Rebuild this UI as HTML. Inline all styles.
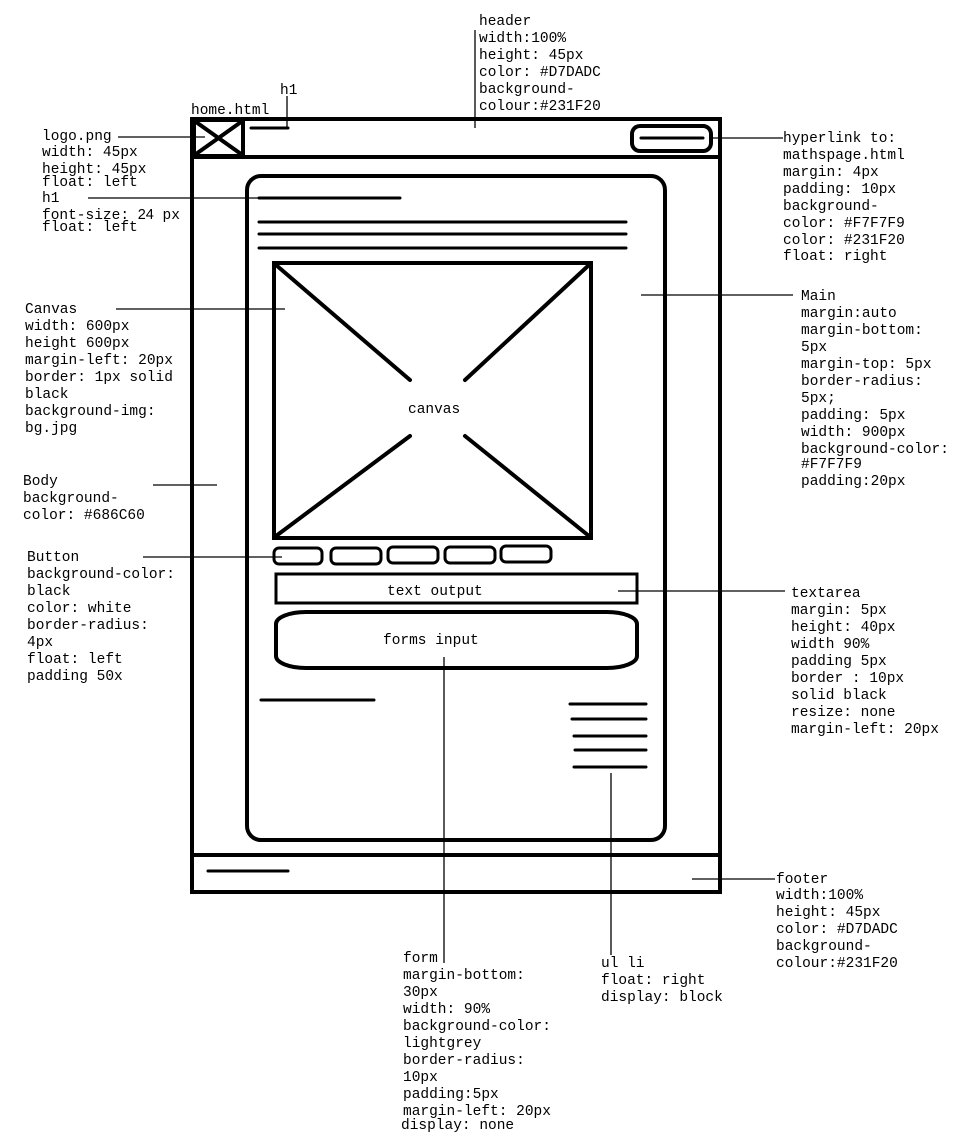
<!DOCTYPE html>
<html><head><meta charset="utf-8"><style>
html,body{margin:0;padding:0;background:#fff;width:969px;height:1140px;overflow:hidden}
svg text{font-family:"Liberation Mono",monospace;font-size:14.5px;fill:#000}
</style></head><body>
<svg width="969" height="1140" viewBox="0 0 969 1140" xmlns="http://www.w3.org/2000/svg">
<g fill="none" stroke="#000" stroke-width="4" stroke-linecap="round">
<rect x="192" y="119" width="528" height="773"/>
<line x1="192" y1="157" x2="720" y2="157"/>
<line x1="192" y1="855" x2="720" y2="855"/>
<rect x="194" y="120" width="49" height="36"/>
<line x1="196" y1="122" x2="241" y2="154"/><line x1="241" y1="122" x2="196" y2="154"/>
<line x1="251" y1="128" x2="288" y2="128" stroke-width="3"/>
<rect x="632" y="126" width="79" height="25" rx="8"/>
<line x1="641" y1="138" x2="703" y2="138" stroke-width="3"/>
<rect x="247" y="176" width="418" height="664" rx="14"/>
<line x1="259" y1="198" x2="400" y2="198" stroke-width="3"/>
<line x1="259" y1="222" x2="626" y2="222" stroke-width="3"/>
<line x1="259" y1="234" x2="626" y2="234" stroke-width="3"/>
<line x1="259" y1="248" x2="626" y2="248" stroke-width="3"/>
<rect x="274" y="263" width="317" height="275" stroke-linecap="butt"/>
<line x1="276" y1="265" x2="410" y2="380"/><line x1="589" y1="265" x2="465" y2="380"/>
<line x1="276" y1="536" x2="410" y2="436"/><line x1="589" y1="536" x2="465" y2="436"/>
<rect x="274" y="548" width="48" height="16" rx="5" stroke-width="3"/>
<rect x="331" y="548" width="50" height="16" rx="5" stroke-width="3"/>
<rect x="388" y="547" width="50" height="16" rx="5" stroke-width="3"/>
<rect x="445" y="547" width="50" height="16" rx="5" stroke-width="3"/>
<rect x="501" y="546" width="50" height="16" rx="5" stroke-width="3"/>
<rect x="276" y="574" width="361" height="29" stroke-width="3" stroke-linecap="butt"/>
<rect x="276" y="612" width="361" height="56" rx="30" ry="12"/>
<line x1="261" y1="700" x2="374" y2="700" stroke-width="3"/>
<line x1="570" y1="704" x2="646" y2="704" stroke-width="3"/>
<line x1="572" y1="719" x2="646" y2="719" stroke-width="3"/>
<line x1="574" y1="736" x2="646" y2="736" stroke-width="3"/>
<line x1="575" y1="750" x2="646" y2="750" stroke-width="3"/>
<line x1="574" y1="767" x2="646" y2="767" stroke-width="3"/>
<line x1="208" y1="871" x2="288" y2="871" stroke-width="3"/>
</g>
<g stroke="#000" stroke-width="1.3" fill="none">
<line x1="118" y1="137" x2="205" y2="137"/>
<line x1="88" y1="198" x2="258" y2="198"/>
<line x1="116" y1="309" x2="285" y2="309"/>
<line x1="153" y1="485" x2="217" y2="485"/>
<line x1="143" y1="557" x2="282" y2="557"/>
<line x1="475" y1="30" x2="475" y2="128"/>
<line x1="287" y1="96" x2="287" y2="128"/>
<line x1="712" y1="138" x2="783" y2="138"/>
<line x1="641" y1="295" x2="793" y2="295"/>
<line x1="618" y1="591" x2="785" y2="591"/>
<line x1="692" y1="879" x2="775" y2="879"/>
<line x1="444" y1="657" x2="444" y2="963"/>
<line x1="611" y1="773" x2="611" y2="955"/>
</g>
<text x="479" y="25">header</text>
<text x="479" y="42">width:100%</text>
<text x="479" y="59">height: 45px</text>
<text x="479" y="76">color: #D7DADC</text>
<text x="479" y="93">background-</text>
<text x="479" y="110">colour:#231F20</text>
<text x="280" y="94">h1</text>
<text x="191" y="114">home.html</text>
<text x="42" y="140">logo.png</text>
<text x="42" y="156">width: 45px</text>
<text x="42" y="173">height: 45px</text>
<text x="42" y="186">float: left</text>
<text x="42" y="202">h1</text>
<text x="42" y="219">font-size: <tspan fill="#000" font-family="Liberation Sans">24</tspan> px</text>
<text x="42" y="231">float: left</text>
<text x="25" y="313">Canvas</text>
<text x="25" y="330">width: 600px</text>
<text x="25" y="347">height 600px</text>
<text x="25" y="364">margin-left: 20px</text>
<text x="25" y="381">border: 1px solid</text>
<text x="25" y="398">black</text>
<text x="25" y="415">background-img:</text>
<text x="25" y="432">bg.jpg</text>
<text x="23" y="485">Body</text>
<text x="23" y="502">background-</text>
<text x="23" y="519">color: #686C60</text>
<text x="27" y="561">Button</text>
<text x="27" y="578">background-color:</text>
<text x="27" y="595">black</text>
<text x="27" y="612">color: white</text>
<text x="27" y="629">border-radius:</text>
<text x="27" y="646">4px</text>
<text x="27" y="663">float: left</text>
<text x="27" y="680">padding 50x</text>
<text x="408" y="413">canvas</text>
<text x="387" y="595">text output</text>
<text x="383" y="644">forms input</text>
<text x="783" y="142">hyperlink to:</text>
<text x="783" y="159">mathspage.html</text>
<text x="783" y="176">margin: 4px</text>
<text x="783" y="193">padding: 10px</text>
<text x="783" y="210">background-</text>
<text x="783" y="227">color: #F7F7F9</text>
<text x="783" y="244">color: #231F20</text>
<text x="783" y="260">float: right</text>
<text x="801" y="300">Main</text>
<text x="801" y="317">margin:auto</text>
<text x="801" y="334">margin-bottom:</text>
<text x="801" y="351">5px</text>
<text x="801" y="368">margin-top: 5px</text>
<text x="801" y="385">border-radius:</text>
<text x="801" y="402">5px;</text>
<text x="801" y="419">padding: 5px</text>
<text x="801" y="436">width: 900px</text>
<text x="801" y="453">background-color:</text>
<text x="801" y="468">#F7F7F9</text>
<text x="801" y="485">padding:20px</text>
<text x="791" y="597">textarea</text>
<text x="791" y="614">margin: 5px</text>
<text x="791" y="631">height: 40px</text>
<text x="791" y="648">width 90%</text>
<text x="791" y="665">padding 5px</text>
<text x="791" y="682">border : 10px</text>
<text x="791" y="699">solid black</text>
<text x="791" y="716">resize: none</text>
<text x="791" y="733">margin-left: 20px</text>
<text x="776" y="883">footer</text>
<text x="776" y="899">width:100%</text>
<text x="776" y="916">height: 45px</text>
<text x="776" y="933">color: #D7DADC</text>
<text x="776" y="950">background-</text>
<text x="776" y="967">colour:#231F20</text>
<text x="403" y="962">form</text>
<text x="403" y="979">margin-bottom:</text>
<text x="403" y="996">30px</text>
<text x="403" y="1013">width: 90%</text>
<text x="403" y="1030">background-color:</text>
<text x="403" y="1047">lightgrey</text>
<text x="403" y="1064">border-radius:</text>
<text x="403" y="1081">10px</text>
<text x="403" y="1098">padding:5px</text>
<text x="403" y="1115">margin-left: 20px</text>
<text x="401" y="1129">display: none</text>
<text x="601" y="967">ul li</text>
<text x="601" y="984">float: right</text>
<text x="601" y="1001">display: block</text>
</svg>
</body></html>
